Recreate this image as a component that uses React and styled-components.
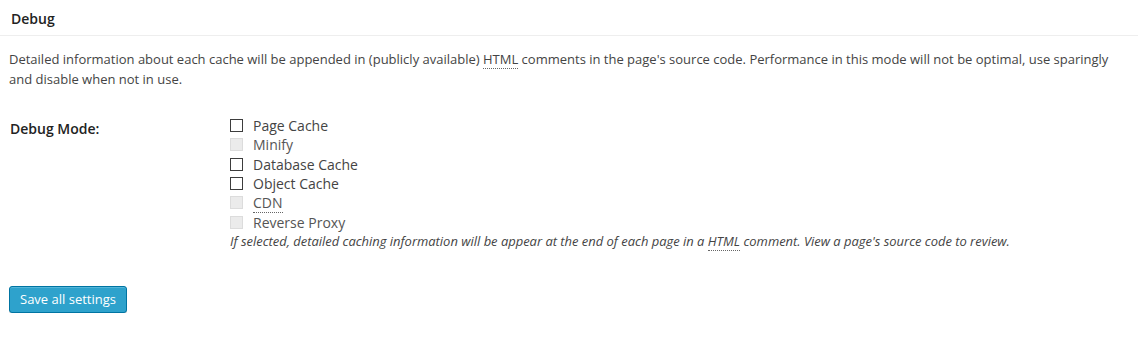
import React from "react";
import styled, { createGlobalStyle } from "styled-components";

const GlobalStyle = createGlobalStyle`
  body {
    margin: 0;
    background: #fff;
    font-family: "Open Sans", "Liberation Sans", sans-serif;
    color: #444;
  }
`;

const Page = styled.div`
  width: 1138px;
`;

const Header = styled.h3`
  margin: 0;
  padding: 9px 11px 0;
  height: 36px;
  box-sizing: border-box;
  font-size: 14px;
  font-weight: 600;
  line-height: 19px;
  color: #222;
  border-bottom: 1px solid #eee;
`;

const Intro = styled.p`
  margin: 13px 0 0;
  padding: 0 28px 0 9px;
  font-size: 13px;
  line-height: 20px;
`;

const Abbr = styled.abbr`
  text-decoration: none;
  border-bottom: 1px dotted #666;
  cursor: help;
`;

const Form = styled.div`
  display: grid;
  grid-template-columns: 220px 1fr;
  margin-top: 22px;
  padding-left: 10px;
`;

const Label = styled.div`
  font-size: 14px;
  font-weight: 600;
  line-height: 20px;
  color: #222;
  padding-top: 8px;
`;

const Options = styled.div`
  display: flex;
  flex-direction: column;
  padding-top: 5px;
`;

const Option = styled.label`
  display: flex;
  align-items: center;
  height: 19.3px;
  font-size: 14px;
  color: ${p => (p.disabled ? "#555" : "#444")};
`;

const Box = styled.span`
  width: 13px;
  height: 13px;
  box-sizing: border-box;
  margin-right: 10px;
  border: 1px solid ${p => (p.disabled ? "#dcdcdc" : "#3d3d3d")};
  background: ${p => (p.disabled ? "#ebebeb" : "#fff")};
`;

const Hint = styled.p`
  margin: 0;
  font-size: 12.95px;
  font-style: italic;
  line-height: 18px;
  color: #444;
`;

const Button = styled.button`
  margin: 36px 0 0 9px;
  height: 27px;
  padding: 0 10px;
  font-family: "Open Sans", "Liberation Sans", sans-serif;
  font-size: 13px;
  color: #fff;
  background: #2ea2cc;
  border: 1px solid #0074a2;
  border-radius: 3px;
  box-shadow: inset 0 1px 0 rgba(120, 200, 230, 0.5),
    0 1px 0 rgba(0, 0, 0, 0.15);
  cursor: pointer;
`;

const options = [
  { name: "Page Cache" },
  { name: "Minify", disabled: true },
  { name: "Database Cache" },
  { name: "Object Cache" },
  { name: "CDN", disabled: true, abbr: true },
  { name: "Reverse Proxy", disabled: true }
];

export default function App() {
  return (
    <Page>
      <GlobalStyle />
      <Header>Debug</Header>
      <Intro>
        Detailed information about each cache will be appended in (publicly
        available) <Abbr title="Hypertext Markup Language">HTML</Abbr> comments
        in the page's source code. Performance in this mode will not be
        optimal, use sparingly and disable when not in use.
      </Intro>
      <Form>
        <Label>Debug Mode:</Label>
        <Options>
          {options.map(opt => (
            <Option key={opt.name} disabled={opt.disabled}>
              <Box disabled={opt.disabled} />
              {opt.abbr ? (
                <Abbr title="Content Delivery Network">{opt.name}</Abbr>
              ) : (
                opt.name
              )}
            </Option>
          ))}
          <Hint>
            If selected, detailed caching information will be appear at the end
            of each page in a <Abbr title="Hypertext Markup Language">HTML</Abbr>{" "}
            comment. View a page's source code to review.
          </Hint>
        </Options>
      </Form>
      <Button>Save all settings</Button>
    </Page>
  );
}
